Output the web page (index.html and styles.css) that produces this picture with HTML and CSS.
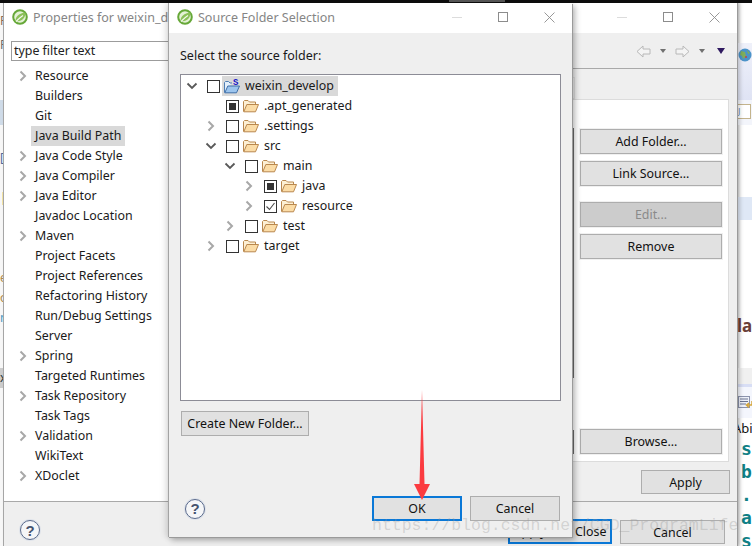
FILE: index.html
```html
<!DOCTYPE html>
<html lang="en">
<head>
<meta charset="utf-8">
<title>Source Folder Selection</title>
<link rel="stylesheet" href="styles.css">
</head>
<body>
<svg class="defs" width="0" height="0" aria-hidden="true">
  <defs>
    <symbol id="chev-r" viewBox="0 0 10 12"><path d="M2.5 1.5 7 6l-4.500 4.500" fill="none" stroke="#a8a8a8" stroke-width="2"/></symbol>
    <symbol id="chev-d" viewBox="0 0 12 10"><path d="M1.500 2.500 6 7l4.500-4.500" fill="none" stroke="#595959" stroke-width="1.800"/></symbol>
    <symbol id="folder" viewBox="0 0 16 14"><path d="M.5 12.500V2.500l1-1h3.500l1.500 1.500H12.500V5" fill="#fdf0d4" stroke="#b9884f"/><path d="M.8 12.800 3.800 5.500H15.500L12.500 12.800Z" fill="#fbdca6" stroke="#b9884f"/></symbol>
    <symbol id="spring" viewBox="0 0 16 16"><circle cx="8" cy="8" r="6.800" fill="#e4f1d6" stroke="#66a838" stroke-width="2"/><path d="M3.500 12C3.500 7.500 7 4 13.500 3.500 13.500 9.500 9.500 13 3.500 12Z" fill="#8cc05a"/><path d="M4 12.500C6.500 10 8.500 8 11 6.500" fill="none" stroke="#f4f9ee" stroke-width="1.100"/></symbol>
    <symbol id="ctl-max" viewBox="0 0 10 10"><rect x=".5" y=".5" width="9" height="9" fill="none" stroke="#8c8c8c"/></symbol>
    <symbol id="ctl-close" viewBox="0 0 11 11"><path d="M.5.500l10 10M10.500.500l-10 10" fill="none" stroke="#8c8c8c" stroke-width=".9"/></symbol>
    <symbol id="arrow-l" viewBox="0 0 15 13"><path d="M7 1 1 6.500 7 12V9H14V4H7Z" fill="#f4f4f4" stroke="#b8b8b8"/></symbol>
    <symbol id="arrow-r" viewBox="0 0 15 13"><path d="M8 1 14 6.500 8 12V9H1V4H8Z" fill="#f4f4f4" stroke="#b8b8b8"/></symbol>
  </defs>
</svg>

<div class="screen">
  <div class="topbar"><span class="topbar-tab"></span></div>
  <div class="desktop">

    <div class="app-left">
      <div class="al-a">F</div>
      <div class="al-b">P</div>
      <div class="al-band"></div>
      <div class="al-c">[</div>
      <div class="al-d">|</div>
      <div class="al-e">e</div>
      <div class="al-f">o</div>
      <div class="al-g">n</div>
      <div class="al-band2">x</div>
    </div>

    <div class="app-right">
      <div class="ar-top"></div>
      <div class="ar-head">
        <svg class="ar-globe" width="14" height="14" viewBox="0 0 14 14"><circle cx="7" cy="7" r="6.500" fill="#4b93c9"/><path d="M3 3l4 1 1 4-3 3-1-3-2-1zM9 2l3 3-2 1z" fill="#7fae5a"/><circle cx="8" cy="9" r="1" fill="#c8443c"/></svg>
      </div>
      <div class="ar-sub"><span class="ar-doc">J</span></div>
      <div class="ar-gap1"></div>
      <div class="ar-sel"></div>
      <div class="ar-gap2"></div>
      <div class="ar-la">la</div>
      <div class="ar-gap3"></div>
      <div class="ar-grey"></div>
      <div class="ar-blue"></div>
      <div class="ar-tool">
        <svg width="15" height="15" viewBox="0 0 15 15"><rect x=".5" y="1.500" width="11" height="11" fill="#eef1fa" stroke="#8b93ad"/><path d="M2 4h8M2 6.500h8M2 9h6" stroke="#6b7491"/><path d="M14 6v4H9M11 8 8.500 10 11 12.500" fill="none" stroke="#d4a53a" stroke-width="1.500"/></svg>
      </div>
      <div class="ar-abi">Abi</div>
      <div class="ar-code">s</div>
      <div class="ar-code">b</div>
      <div class="ar-code">.</div>
      <div class="ar-code">a</div>
      <div class="ar-code">s</div>
    </div>

    <section class="window back">
      <header class="titlebar">
        <svg class="logo" width="16" height="16"><use href="#spring"/></svg>
        <span class="title">Properties for weixin_develop</span>
        <span class="controls">
          <span class="ctl"><span class="ctl-min"></span></span>
          <span class="ctl"><svg width="10" height="10"><use href="#ctl-max"/></svg></span>
          <span class="ctl"><svg width="11" height="11"><use href="#ctl-close"/></svg></span>
        </span>
      </header>
      <div class="back-content">
        <aside class="sidebar">
          <div class="filter">type filter text</div>
          <ul class="nav">
            <li class="nav-row"><svg class="nav-chev" width="10" height="12"><use href="#chev-r"/></svg><span class="nav-label">Resource</span></li>
            <li class="nav-row"><span class="nav-chev"></span><span class="nav-label">Builders</span></li>
            <li class="nav-row"><span class="nav-chev"></span><span class="nav-label">Git</span></li>
            <li class="nav-row"><span class="nav-chev"></span><span class="nav-label is-selected">Java Build Path</span></li>
            <li class="nav-row"><svg class="nav-chev" width="10" height="12"><use href="#chev-r"/></svg><span class="nav-label">Java Code Style</span></li>
            <li class="nav-row"><svg class="nav-chev" width="10" height="12"><use href="#chev-r"/></svg><span class="nav-label">Java Compiler</span></li>
            <li class="nav-row"><svg class="nav-chev" width="10" height="12"><use href="#chev-r"/></svg><span class="nav-label">Java Editor</span></li>
            <li class="nav-row"><span class="nav-chev"></span><span class="nav-label">Javadoc Location</span></li>
            <li class="nav-row"><svg class="nav-chev" width="10" height="12"><use href="#chev-r"/></svg><span class="nav-label">Maven</span></li>
            <li class="nav-row"><span class="nav-chev"></span><span class="nav-label">Project Facets</span></li>
            <li class="nav-row"><span class="nav-chev"></span><span class="nav-label">Project References</span></li>
            <li class="nav-row"><span class="nav-chev"></span><span class="nav-label">Refactoring History</span></li>
            <li class="nav-row"><span class="nav-chev"></span><span class="nav-label">Run/Debug Settings</span></li>
            <li class="nav-row"><span class="nav-chev"></span><span class="nav-label">Server</span></li>
            <li class="nav-row"><svg class="nav-chev" width="10" height="12"><use href="#chev-r"/></svg><span class="nav-label">Spring</span></li>
            <li class="nav-row"><span class="nav-chev"></span><span class="nav-label">Targeted Runtimes</span></li>
            <li class="nav-row"><svg class="nav-chev" width="10" height="12"><use href="#chev-r"/></svg><span class="nav-label">Task Repository</span></li>
            <li class="nav-row"><span class="nav-chev"></span><span class="nav-label">Task Tags</span></li>
            <li class="nav-row"><svg class="nav-chev" width="10" height="12"><use href="#chev-r"/></svg><span class="nav-label">Validation</span></li>
            <li class="nav-row"><span class="nav-chev"></span><span class="nav-label">WikiText</span></li>
            <li class="nav-row"><svg class="nav-chev" width="10" height="12"><use href="#chev-r"/></svg><span class="nav-label">XDoclet</span></li>
          </ul>
        </aside>
        <div class="main">
          <div class="toolbar">
            <svg class="tb-arrow" width="15" height="13"><use href="#arrow-l"/></svg>
            <span class="tb-drop"></span>
            <svg class="tb-arrow tb-next" width="15" height="13"><use href="#arrow-r"/></svg>
            <span class="tb-drop"></span>
            <span class="tb-menu"></span>
          </div>
          <div class="tab"></div>
          <div class="panel">
            <div class="panel-left">
              <div class="panel-list"></div>
              <div class="panel-field"></div>
            </div>
            <div class="panel-buttons">
              <button class="btn btn-side">Add Folder...</button>
              <button class="btn btn-side mt7">Link Source...</button>
              <button class="btn btn-side btn-disabled mt16">Edit...</button>
              <button class="btn btn-side mt7">Remove</button>
              <button class="btn btn-side mt170">Browse...</button>
            </div>
          </div>
          <div class="apply-row"><button class="btn btn-apply">Apply</button></div>
        </div>
      </div>
      <footer class="back-footer">
        <span class="help">?</span>
        <button class="btn btn-default btn-close">Apply and Close</button>
        <button class="btn btn-cancel-back">Cancel</button>
      </footer>
    </section>

    <section class="window front">
      <header class="titlebar">
        <svg class="logo" width="16" height="16"><use href="#spring"/></svg>
        <span class="title">Source Folder Selection</span>
        <span class="controls">
          <span class="ctl"><span class="ctl-min"></span></span>
          <span class="ctl"><svg width="10" height="10"><use href="#ctl-max"/></svg></span>
          <span class="ctl"><svg width="11" height="11"><use href="#ctl-close"/></svg></span>
        </span>
      </header>
      <div class="dialog-body">
        <div class="dialog-label">Select the source folder:</div>
        <div class="tree">
          <div class="tree-row d0">
            <span class="twist"><svg width="12" height="10"><use href="#chev-d"/></svg></span><span class="check"></span>
            <span class="project">
              <svg class="ticon" width="16" height="16" viewBox="0 0 16 16"><path d="M.5 14.500V4.500l1-1h3l1.500 1.500H8" fill="#e3effb" stroke="#4f7fb5"/><path d="M.8 14.800 3.800 8H15.500L12.500 14.800Z" fill="#9cc5ee" stroke="#3f6fa8"/><text class="s-mark" x="9" y="6.500">S</text></svg>
              <span class="tlabel">weixin_develop</span>
            </span>
          </div>
          <div class="tree-row d1">
            <span class="twist"></span><span class="check check-mixed"></span>
            <svg class="ticon" width="16" height="14"><use href="#folder"/></svg><span class="tlabel">.apt_generated</span>
          </div>
          <div class="tree-row d1">
            <span class="twist"><svg width="10" height="12"><use href="#chev-r"/></svg></span><span class="check"></span>
            <svg class="ticon" width="16" height="14"><use href="#folder"/></svg><span class="tlabel">.settings</span>
          </div>
          <div class="tree-row d1">
            <span class="twist"><svg width="12" height="10"><use href="#chev-d"/></svg></span><span class="check"></span>
            <svg class="ticon" width="16" height="14"><use href="#folder"/></svg><span class="tlabel">src</span>
          </div>
          <div class="tree-row d2">
            <span class="twist"><svg width="12" height="10"><use href="#chev-d"/></svg></span><span class="check"></span>
            <svg class="ticon" width="16" height="14"><use href="#folder"/></svg><span class="tlabel">main</span>
          </div>
          <div class="tree-row d3">
            <span class="twist"><svg width="10" height="12"><use href="#chev-r"/></svg></span><span class="check check-mixed"></span>
            <svg class="ticon" width="16" height="14"><use href="#folder"/></svg><span class="tlabel">java</span>
          </div>
          <div class="tree-row d3">
            <span class="twist"><svg width="10" height="12"><use href="#chev-r"/></svg></span><span class="check"><svg class="tick" width="11" height="11" viewBox="0 0 11 11"><path d="M1.500 5.500 4.500 8.500 9.500 2" fill="none" stroke="#4a4a4a" stroke-width="1.100"/></svg></span>
            <svg class="ticon" width="16" height="14"><use href="#folder"/></svg><span class="tlabel">resource</span>
          </div>
          <div class="tree-row d2">
            <span class="twist"><svg width="10" height="12"><use href="#chev-r"/></svg></span><span class="check"></span>
            <svg class="ticon" width="16" height="14"><use href="#folder"/></svg><span class="tlabel">test</span>
          </div>
          <div class="tree-row d1">
            <span class="twist"><svg width="10" height="12"><use href="#chev-r"/></svg></span><span class="check"></span>
            <svg class="ticon" width="16" height="14"><use href="#folder"/></svg><span class="tlabel">target</span>
          </div>
        </div>
        <button class="btn btn-create">Create New Folder...</button>
        <div class="dialog-footer">
          <span class="help">?</span>
          <button class="btn btn-default btn-ok">OK</button>
          <button class="btn btn-cancel">Cancel</button>
        </div>
      </div>
    </section>

    <svg class="red-arrow" width="16" height="111" viewBox="0 0 16 111"><path d="M8 0 10.500 94H16L8 110 0 94H5.500Z" fill="#fb3b40"/></svg>
    <div class="watermark">https://blog.csdn.net/CGD_ProgramLife</div>
  </div>
</div>
</body>
</html>
```

FILE: styles.css
```css
* { box-sizing: border-box; }
html, body { margin: 0; padding: 0; background: #fff; }
body { font-family: "Noto Sans", "Liberation Sans", sans-serif; font-size: 12.4px; color: #1a1a1a; }
.defs { position: absolute; }
.screen { width: 752px; height: 546px; overflow: hidden; display: flex; flex-direction: column; }
.topbar { height: 3px; background: #0c0c0c; flex: none; position: relative; display: flex; padding-left: 449px; }
.topbar-tab { width: 56px; height: 2px; background: #555; }
.desktop { position: relative; flex: 1; overflow: hidden; background: #fff; }

/* Buttons */
.btn { display: block; font: inherit; color: #111; padding: 0; margin: 0; background: #e1e1e1; border: 1px solid #adadad; border-radius: 0; white-space: nowrap; }
.btn-side { width: 142px; height: 25px; flex: none; box-shadow: 0 0 0 1px #f0f0f0; }
.btn-disabled { background: #cccccc; color: #8a8a8a; }
.mt7 { margin-top: 7px; }
.mt16 { margin-top: 16px; }
.mt170 { margin-top: 170px; }
.btn-apply { width: 89px; height: 24px; }
.btn-default { border: 2px solid #0a78d7; }

/* Apps peeking out behind the windows */
.app-left { position: absolute; left: 0; top: 0; width: 3px; height: 543px; overflow: hidden; background: #f7f7f7; font-size: 12px; line-height: 20px; color: #b08a4a; }
.al-a { height: 20px; margin-top: 8px; color: #8a6a55; }
.al-b { height: 20px; margin-top: 4px; color: #6a6a6a; }
.al-band { height: 25px; margin-top: 45px; background: #cfdbe8; }
.al-c { height: 20px; margin-top: 23px; color: #4a6a9a; }
.al-d { height: 20px; margin-top: 20px; color: #c9a24a; }
.al-e { height: 20px; margin-top: 60px; }
.al-f { height: 20px; }
.al-g { height: 20px; color: #4a9ac4; }
.al-band2 { height: 20px; margin-top: 40px; background: #ccc; color: #233; }

.app-right { position: absolute; left: 737px; top: 0; width: 15px; height: 543px; overflow: hidden; background: #fff; box-shadow: inset 4px 0 3px -2px rgba(0,0,0,.18); }
.ar-top { height: 40px; }
.ar-head { height: 57px; background: linear-gradient(#eff1fa, #dfe3f4); padding: 5px 0 0 1px; }
.ar-globe { display: block; }
.ar-sub { height: 25px; background: #f3f5fb; padding: 4px 0 0 0; }
.ar-doc { display: block; width: 14px; height: 15px; border: 1px solid #c4b48c; background: #fff; font-size: 9px; line-height: 13px; color: #6a86b4; }
.ar-gap1 { height: 72px; }
.ar-sel { height: 23px; background: #dfe8f6; }
.ar-gap2 { height: 94px; }
.ar-la { height: 24px; font-size: 17px; font-weight: 700; line-height: 24px; color: #6a4038; white-space: nowrap; }
.ar-gap3 { height: 30px; }
.ar-grey { height: 16px; background: #f0f0f0; }
.ar-blue { height: 3px; background: #d8def5; }
.ar-tool { height: 31px; background: #f4f6fd; padding: 8px 0 0 1px; }
.ar-abi { height: 18px; font-size: 13px; line-height: 18px; margin: 1px 0 0 -4px; color: #111; white-space: nowrap; }
.ar-code { height: 23px; padding-left: 4px; font-family: "DejaVu Sans Mono", monospace; font-size: 18px; font-weight: 700; line-height: 23px; color: #0f7f85; }

/* Windows */
.window { position: absolute; top: 0; display: flex; flex-direction: column; background: #efefef; }
.back { left: 3px; width: 734px; height: 543px; border-left: 1px solid #a6a6a6; box-shadow: 1px 0 0 #9a9a9a, 3px 0 4px rgba(0,0,0,.2); }
.front { left: 168px; width: 404px; height: 534px; border-left: 1px solid #a3a3a3; box-shadow: 1px 1px 0 #9a9a9a, 3px 3px 6px rgba(0,0,0,.3), -3px 0 6px rgba(0,0,0,.1); }
.titlebar { height: 30px; flex: none; background: #fff; display: flex; align-items: center; padding: 0 0 2px 8px; }
.logo { flex: none; margin-right: 5px; }
.title { flex: 1; font-size: 12.5px; color: #858585; white-space: nowrap; overflow: hidden; }
.controls { flex: none; display: flex; }
.ctl { width: 46px; height: 28px; display: flex; align-items: center; justify-content: center; }
.ctl-min { width: 10px; height: 1px; background: #dcdcdc; }

/* Back window */
.back-content { display: flex; height: 468px; flex: none; }
.sidebar { width: 164px; flex: none; background: #fff; padding-top: 8px; }
.filter { width: 175px; height: 20px; margin-left: 7px; border: 1px solid #9c9c9c; background: #fff; line-height: 18px; padding-left: 2px; color: #222; }
.nav { list-style: none; margin: 5px 0 0; padding: 0 0 0 14px; }
.nav-row { height: 20px; display: flex; align-items: center; }
.nav-chev { display: block; width: 10px; flex: none; margin-right: 3px; }
.nav-label { line-height: 20px; padding: 0 4px; white-space: nowrap; }
.is-selected { background: #d9d9d9; }
.main { flex: 1; min-width: 0; display: flex; flex-direction: column; }
.toolbar { height: 36px; border-bottom: 1px solid #a9a9a9; display: flex; align-items: center; justify-content: flex-end; padding: 1px 12px 0 0; flex: none; }
.tb-next { margin-left: 9px; }
.tb-drop { width: 0; height: 0; margin-left: 9px; border-style: solid; border-width: 4px 3.5px 0; border-color: #707070 transparent transparent; }
.tb-menu { width: 0; height: 0; margin-left: 12px; border-style: solid; border-width: 6px 4.5px 0; border-color: #2f1a60 transparent transparent; }
.tab { height: 22px; width: 407px; margin-top: 8px; border: 1px solid #e0e0e0; flex: none; }
.panel { height: 363px; flex: none; margin-right: 8px; background: #fff; border: 1px solid #dcdcdc; display: flex; }
.panel-left { flex: 1; min-width: 0; margin-right: 6px; }
.panel-list { height: 250px; margin-top: 28px; border-right: 1px solid #6d6d6d; }
.panel-field { height: 24px; margin-top: 52px; border-right: 1px solid #6d6d6d; }
.panel-buttons { width: 148px; padding: 29px 6px 0 0; flex: none; display: flex; flex-direction: column; }
.apply-row { display: flex; justify-content: flex-end; padding: 8px 7px 0 0; }
.back-footer { height: 45px; flex: none; border-top: 1px solid #a9a9a9; display: flex; align-items: flex-start; padding: 17px 12px 0 16px; }
.back-footer .help { margin-top: 1px; }
.btn-close { margin-left: auto; width: 104px; height: 25px; }
.btn-cancel-back { margin-left: 8px; width: 105px; height: 24px; margin-top: 1px; }

/* Dialog */
.dialog-body { flex: 1; min-height: 0; display: flex; flex-direction: column; padding: 13px 11px 16px; }
.dialog-label { height: 20px; line-height: 20px; margin-bottom: 8px; flex: none; font-size: 12.5px; }
.tree { height: 327px; flex: none; background: #fff; border: 1px solid #8c8c96; padding-top: 1px; }
.tree-row { height: 20px; display: flex; align-items: center; }
.d0 { padding-left: 5px; }
.d1 { padding-left: 24px; }
.d2 { padding-left: 43px; }
.d3 { padding-left: 62px; }
.twist { width: 12px; height: 12px; flex: none; margin-right: 9px; display: flex; align-items: center; justify-content: center; }
.check { width: 13px; height: 13px; flex: none; margin-right: 4px; border: 1px solid #333; background: #fff; display: flex; align-items: center; justify-content: center; }
.check-mixed::after { content: ""; display: block; width: 7px; height: 7px; background: #333; }
.tick { display: block; }
.ticon { flex: none; margin-right: 5px; display: block; }
.tlabel { white-space: nowrap; line-height: 20px; }
.project { display: flex; align-items: center; height: 20px; background: #d9d9d9; padding: 0 4px 0 2px; margin-left: -2px; }
.s-mark { font-family: "Liberation Mono", monospace; font-size: 9px; font-weight: 700; fill: #1414c8; }
.btn-create { width: 128px; height: 25px; margin: 10px 0 0 1px; flex: none; }
.dialog-footer { margin-top: auto; display: flex; align-items: center; padding: 0 1px 0 5px; }
.btn-ok { margin-left: auto; width: 90px; height: 25px; }
.btn-cancel { margin-left: 8px; width: 90px; height: 25px; }
.help { width: 20px; height: 20px; flex: none; border: 1.500px solid #5b6b8c; border-radius: 50%; box-shadow: 0 0 0 1px #dfe3ea; background: #f5f6f8; display: flex; align-items: center; justify-content: center; font-family: "Liberation Sans", sans-serif; font-size: 15px; font-weight: 700; color: #46536e; }

/* Overlays */
.red-arrow { position: absolute; left: 414px; top: 387px; }
.watermark { position: absolute; left: 372px; top: 513px; font-family: "Liberation Mono", monospace; font-size: 16.500px; line-height: 20px; color: rgba(150,150,150,.32); white-space: nowrap; }
```
